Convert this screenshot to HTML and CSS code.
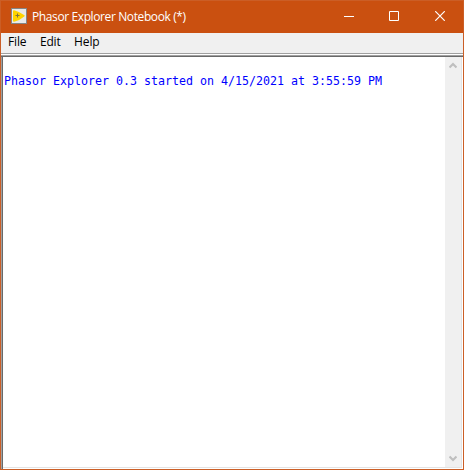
FILE: index.html
```html
<!DOCTYPE html>
<html lang="en">
<head>
<meta charset="utf-8">
<title>Phasor Explorer Notebook (*)</title>
<link rel="stylesheet" href="styles.css">
</head>
<body>
<div class="window">
  <header class="titlebar">
    <svg class="app-icon" width="16" height="16" viewBox="0 0 16 16">
      <rect x=".5" y=".5" width="15" height="15" fill="#e9e9e9" stroke="#858585"/>
      <path d="M2 3.2Q2 2 3.2 2.2Q9 3.8 13.5 7.3Q14 8 13.3 8.5Q9 12.2 3.2 13.8Q2 14 2 12.8Z" fill="#ffd400"/>
      <path d="M4.5 7.5H8.5M6.5 5.5V9.5" stroke="#7d7340" fill="none"/>
    </svg>
    <h1 class="title">Phasor Explorer Notebook (*)</h1>
    <div class="controls">
      <button class="control" aria-label="Minimize"><svg width="10" height="10"><path d="M0 5.5H10" stroke="#fff"/></svg></button>
      <button class="control" aria-label="Maximize"><svg width="10" height="10"><path d="M.5.5H9.5V9.5H.5Z" fill="none" stroke="#fff"/></svg></button>
      <button class="control" aria-label="Close"><svg width="10" height="10"><path d="M.2.2L9.8 9.8M9.8.2L.2 9.8" stroke="#fff" stroke-width="1.2"/></svg></button>
    </div>
  </header>
  <nav class="menu">
    <span class="menu-file">File</span>
    <span class="menu-edit">Edit</span>
    <span class="menu-help">Help</span>
  </nav>
  <main class="editor">
    <pre class="text">Phasor Explorer 0.3 started on 4/15/2021 at 3:55:59 PM</pre>
    <div class="scrollbar">
      <svg width="8" height="7"><path d="M.5 5.5L4 2L7.5 5.5" fill="none" stroke="#bfbfbf" stroke-width="2.2"/></svg>
      <svg width="8" height="7"><path d="M.5 1.5L4 5L7.5 1.5" fill="none" stroke="#bfbfbf" stroke-width="2.2"/></svg>
    </div>
  </main>
</div>
</body>
</html>
```
FILE: styles.css
```css
* { box-sizing: border-box; }
body { margin: 0; }
.window {
  width: 464px;
  height: 470px;
  display: flex;
  flex-direction: column;
  border: 1px solid #cb5e26;
  background: #f0f0f0;
  font-family: "Open Sans", "Noto Sans", sans-serif;
}
.titlebar {
  height: 32px;
  flex: none;
  display: flex;
  align-items: center;
  padding-left: 10px;
  padding-bottom: 2px;
  background: #ca5010;
}
.app-icon { flex: none; }
.title {
  flex: 1;
  margin: 2px 0 0 5px;
  color: #fff;
  font-size: 12px;
  font-weight: 400;
  line-height: 16px;
  letter-spacing: -0.39px;
  white-space: nowrap;
}
.controls { display: flex; height: 30px; }
.control {
  width: 46px;
  height: 30px;
  display: flex;
  align-items: center;
  justify-content: center;
  padding: 0;
  border: 0;
  background: none;
}
.control:first-child,
.control:nth-child(2) { width: 45px; padding-right: 1px; }
.menu {
  height: 20px;
  flex: none;
  display: flex;
  gap: 13.5px;
  padding: 0 0 0 7px;
  font-size: 12px;
  line-height: 18px;
  letter-spacing: -0.15px;
  color: #000;
}
.editor {
  flex: 1;
  display: flex;
  justify-content: space-between;
  background: #fff;
  border-top: 1px solid #a0a0a0;
  box-shadow: inset 0 1px #fff, inset 0 2px #a0a0a0, inset 0 3px #696969,
    inset 1px 0 #a0a0a0, inset 2px 0 #696969, inset -1px -1px #fff, inset -2px -2px #e3e3e3;
  padding: 3px 2px 2px 2px;
}
.text {
  margin: 17px 0 0 1px;
  color: #0000ff;
  font-family: "DejaVu Sans Mono", monospace;
  font-size: 11.63px;
  line-height: 14px;
}
.scrollbar {
  width: 16px;
  display: flex;
  flex-direction: column;
  align-items: center;
  justify-content: space-between;
  padding: 5px 1px 5px 0;
  background: #f0f0f0;
}
```
